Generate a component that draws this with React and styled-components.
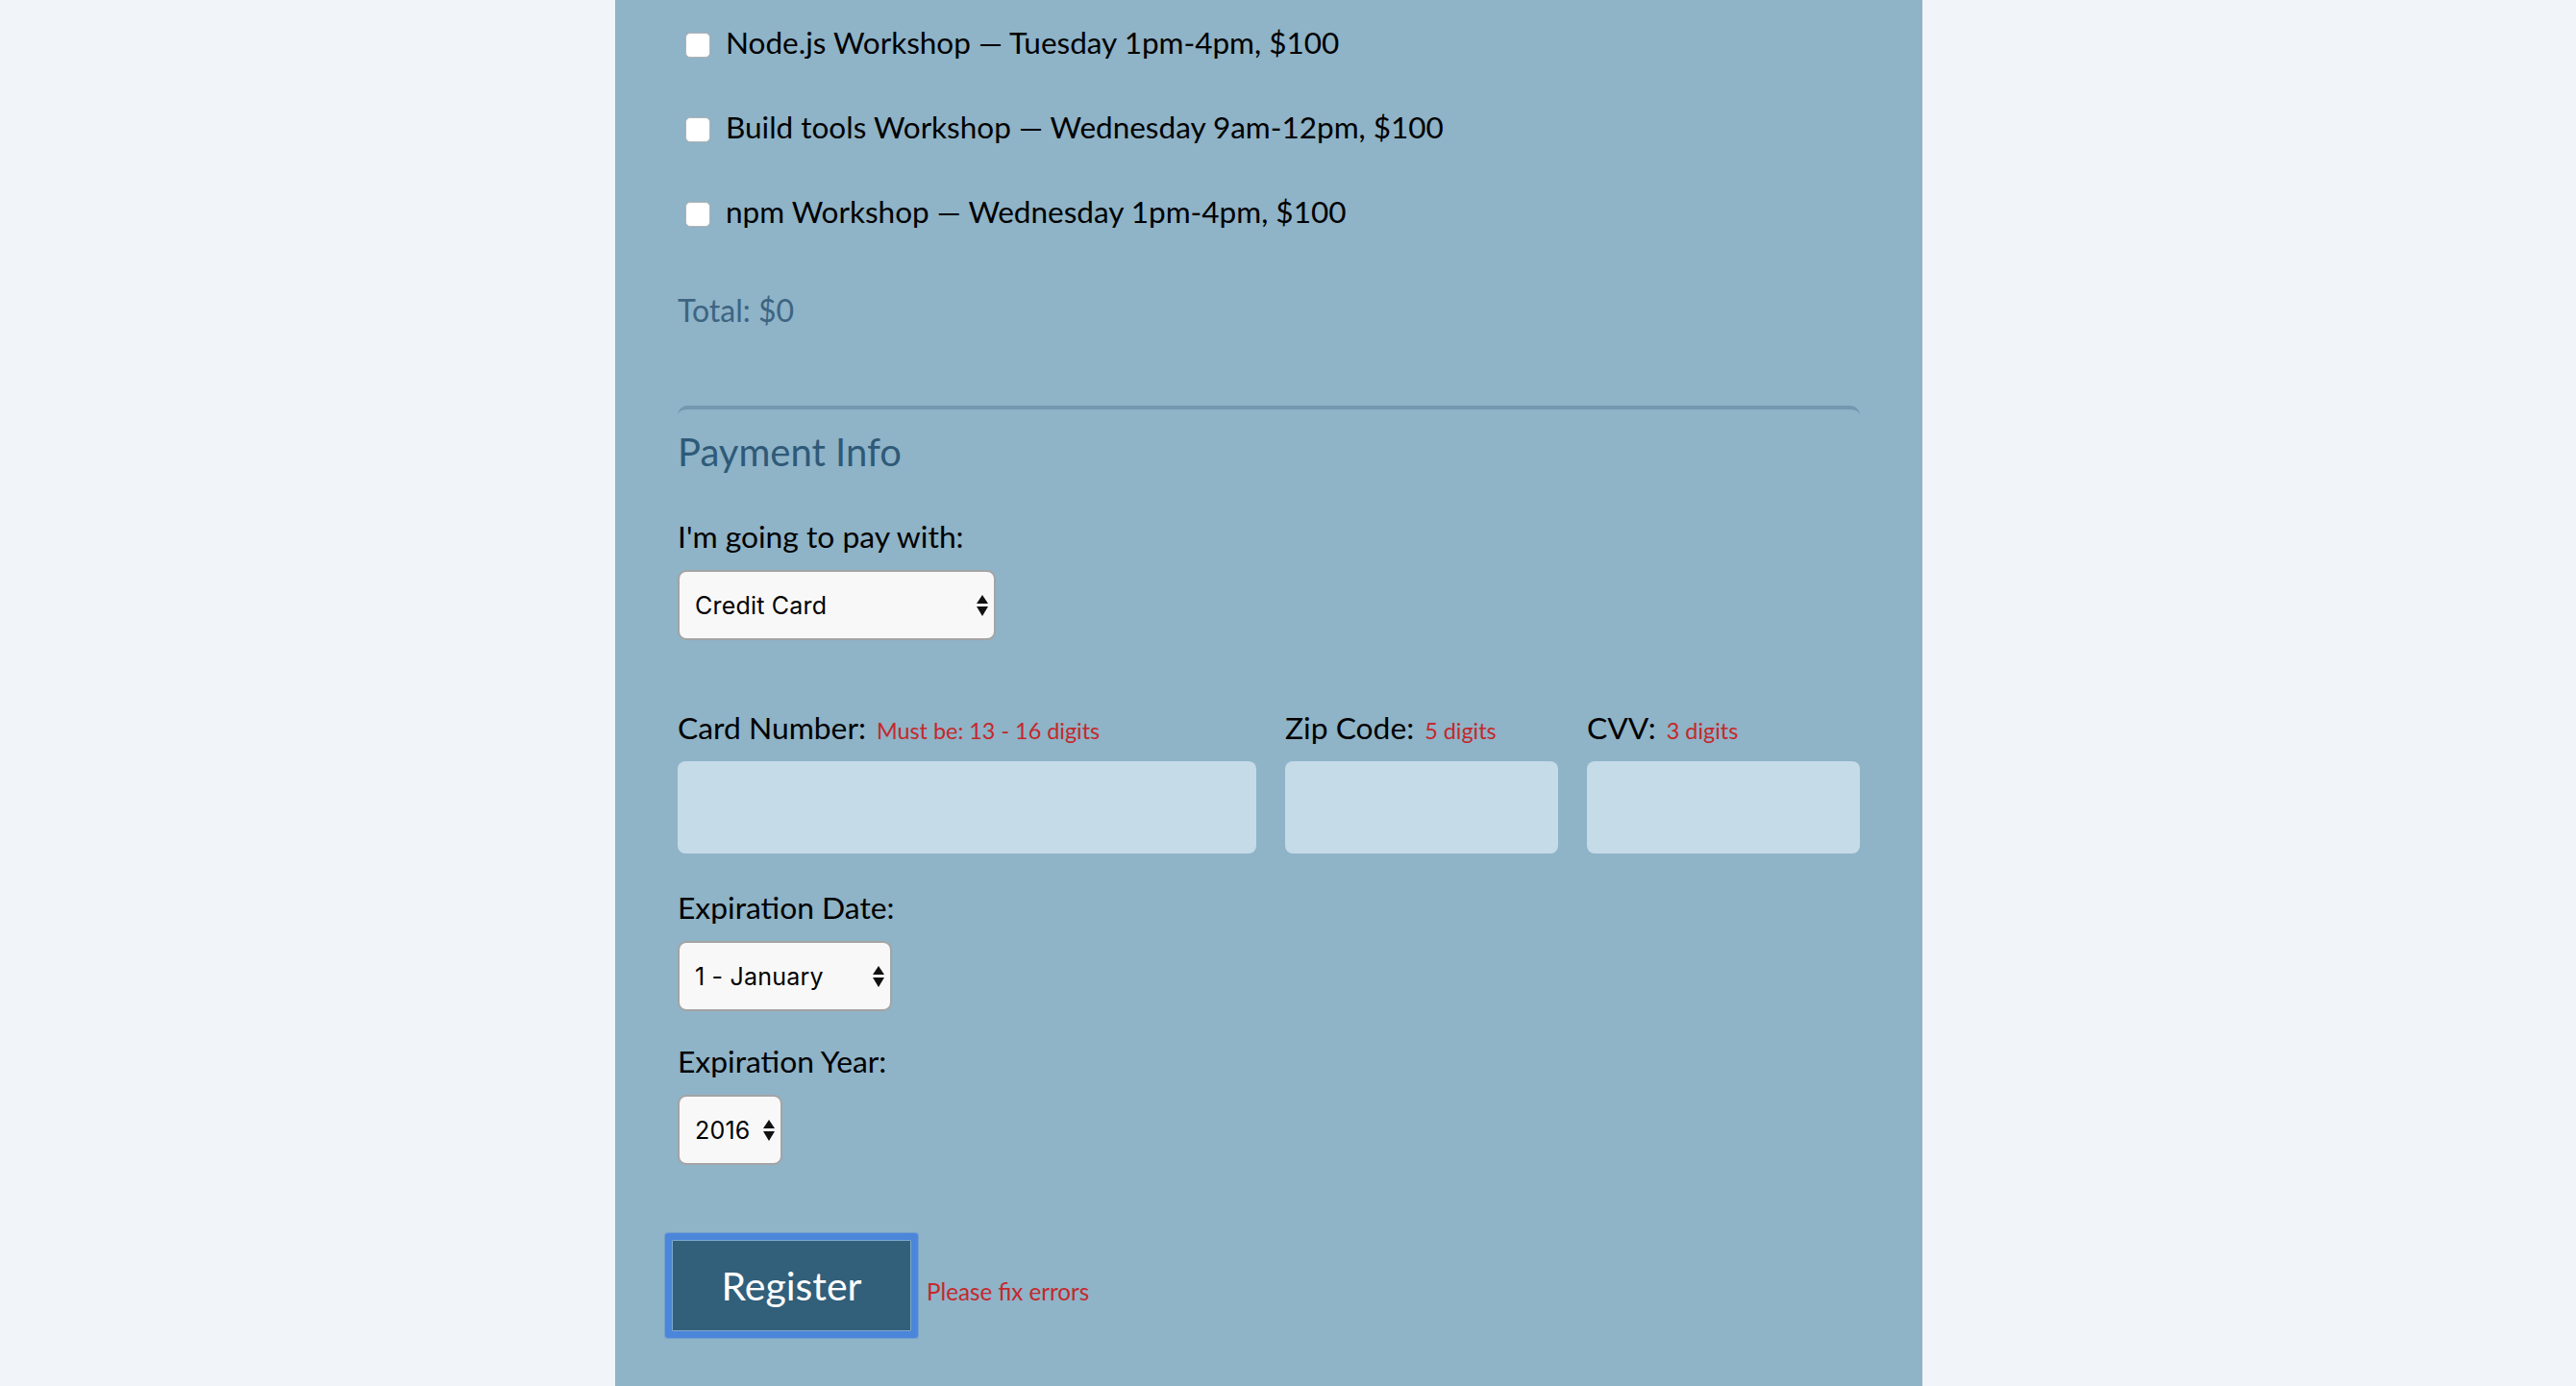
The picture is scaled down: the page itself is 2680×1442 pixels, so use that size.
import React from "react";
import styled, { createGlobalStyle } from "styled-components";

const GlobalStyle = createGlobalStyle`
  html, body {
    margin: 0;
    padding: 0;
    background: #f1f4f8;
  }
  body {
    font-family: Lato, "Open Sans", sans-serif;
    color: #000;
  }
  * { box-sizing: border-box; }
`;

const Page = styled.div`
  min-height: 100vh;
  display: flex;
  justify-content: center;
  padding-right: 40px;
`;

const Panel = styled.form`
  width: 1360px;
  min-height: 100vh;
  background: #8fb3c7;
  padding: 0 65px 40px;
`;

const ActivityList = styled.div`
  display: flex;
  flex-direction: column;
`;

const ActivityRow = styled.label`
  display: flex;
  align-items: center;
  height: 88px;
  font-size: 31.5px;
  line-height: 36px;
`;

const Checkbox = styled.input.attrs({ type: "checkbox" })`
  appearance: none;
  -webkit-appearance: none;
  flex: none;
  width: 26px;
  height: 26px;
  margin: 6px 16px 0 8px;
  background: #fff;
  border: 1px solid #b3b3b3;
  border-radius: 5px;
`;

const Total = styled.p`
  margin: 40px 0 0;
  font-size: 32px;
  line-height: 37px;
  color: #3d6582;
`;

const Section = styled.section`
  margin-top: 81px;
  border-top: 4px solid #7498af;
  border-radius: 10px 10px 0 0;
`;

const SectionTitle = styled.h2`
  margin: 20px 0 0;
  font-size: 40px;
  font-weight: 400;
  line-height: 49px;
  color: #2e5a78;
`;

const Field = styled.div`
  margin-top: ${(p) => p.$top}px;
`;

const Label = styled.label`
  display: block;
  font-size: 31.8px;
  line-height: 36px;
  margin-bottom: 17px;
  white-space: nowrap;
`;

const Hint = styled.span`
  margin-left: 5px;
  font-size: 23.4px;
  line-height: 1;
  color: #c4282b;
`;

const SelectWrap = styled.div`
  position: relative;
  width: ${(p) => p.$w}px;
  height: 73px;
`;

const NativeSelect = styled.select`
  appearance: none;
  -webkit-appearance: none;
  width: 100%;
  height: 100%;
  border: 2px solid #a4a4a4;
  border-radius: 9px;
  background: #f8f8f8;
  font-family: Inter, "Liberation Sans", sans-serif;
  font-size: 25px;
  letter-spacing: 0.2px;
  color: #000;
  padding: 0 0 0 16px;
  margin: 0;
`;

const Arrows = styled.svg`
  position: absolute;
  right: 8px;
  top: 50%;
  transform: translateY(-50%);
  width: 12px;
  height: 22px;
  pointer-events: none;
`;

const CardGrid = styled.div`
  margin-top: 73px;
  display: grid;
  grid-template-columns: 1fr 284px 284px;
  column-gap: 30px;
`;

const TextInput = styled.input`
  display: block;
  width: 100%;
  height: 96px;
  border: none;
  border-radius: 8px;
  background: #c5dbe7;
  margin: 0;
`;

const SubmitRow = styled.div`
  margin-top: 78px;
  display: flex;
  align-items: baseline;
  gap: 16px;
`;

const RegisterButton = styled.button`
  width: 249px;
  height: 95px;
  margin-left: -6px;
  border: 1px solid #80a8cf;
  border-radius: 1px;
  background: #325f7a;
  color: #fff;
  font-family: Lato, sans-serif;
  font-size: 41px;
  box-shadow: 0 0 0 7px #4c86da, 0 0 0 8px rgba(76, 134, 218, 0.4);
  padding: 0;
`;

const ErrorText = styled.span`
  font-size: 24.2px;
  color: #c4282b;
`;

function Select({ width, options }) {
  return (
    <SelectWrap $w={width}>
      <NativeSelect defaultValue={options[0]}>
        {options.map((o) => (
          <option key={o}>{o}</option>
        ))}
      </NativeSelect>
      <Arrows viewBox="0 0 12 22">
        <polygon points="6,0 12,9 0,9" fill="#111" />
        <polygon points="0,12 12,12 6,22" fill="#111" />
      </Arrows>
    </SelectWrap>
  );
}

const activities = [
  "Node.js Workshop — Tuesday 1pm-4pm, $100",
  "Build tools Workshop — Wednesday 9am-12pm, $100",
  "npm Workshop — Wednesday 1pm-4pm, $100",
];

export default function App() {
  return (
    <>
      <GlobalStyle />
      <Page>
        <Panel onSubmit={(e) => e.preventDefault()}>
          <ActivityList>
            {activities.map((a) => (
              <ActivityRow key={a}>
                <Checkbox />
                <span>{a}</span>
              </ActivityRow>
            ))}
          </ActivityList>
          <Total>Total: $0</Total>

          <Section>
            <SectionTitle>Payment Info</SectionTitle>
            <Field $top={45}>
              <Label>I'm going to pay with:</Label>
              <Select width={331} options={["Credit Card", "PayPal", "Bitcoin"]} />
            </Field>

            <CardGrid>
              <div>
                <Label>
                  Card Number:<Hint> Must be: 13 - 16 digits</Hint>
                </Label>
                <TextInput type="text" />
              </div>
              <div>
                <Label>
                  Zip Code:<Hint> 5 digits</Hint>
                </Label>
                <TextInput type="text" />
              </div>
              <div>
                <Label>
                  CVV:<Hint> 3 digits</Hint>
                </Label>
                <TextInput type="text" />
              </div>
            </CardGrid>

            <Field $top={38}>
              <Label>Expiration Date:</Label>
              <Select
                width={223}
                options={["1 - January", "2 - February", "3 - March"]}
              />
            </Field>
            <Field $top={34}>
              <Label>Expiration Year:</Label>
              <Select width={109} options={["2016", "2017", "2018"]} />
            </Field>

            <SubmitRow>
              <RegisterButton type="submit">Register</RegisterButton>
              <ErrorText>Please fix errors</ErrorText>
            </SubmitRow>
          </Section>
        </Panel>
      </Page>
    </>
  );
}
